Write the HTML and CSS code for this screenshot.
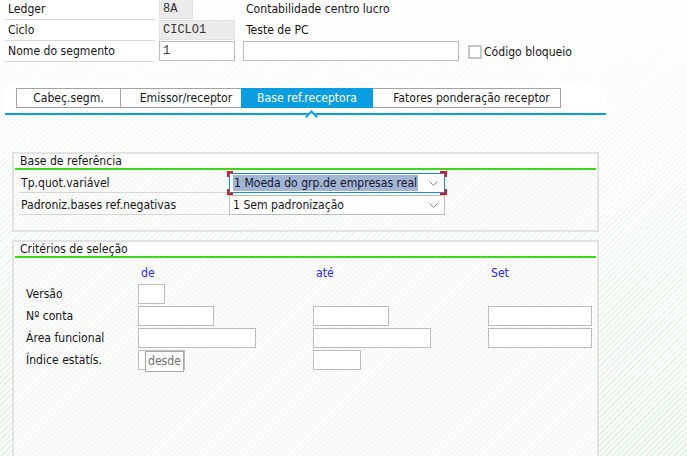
FILE: index.html
```html
<!DOCTYPE html>
<html lang="pt">
<head>
<meta charset="utf-8">
<title>Segmento</title>
<link rel="stylesheet" href="styles.css">
</head>
<body>
<div class="page">
  <div class="hdr">
    <div class="lbl">Ledger</div>
    <div class="cell"><div class="fld ro mono w-ledger">8A</div></div>
    <div class="desc">Contabilidade centro lucro</div>

    <div class="lbl">Ciclo</div>
    <div class="cell"><div class="fld ro mono w-ciclo">CICLO1</div></div>
    <div class="desc">Teste de PC</div>

    <div class="lbl">Nome do segmento</div>
    <div class="cell"><div class="fld mono w-ciclo">1</div></div>
    <div class="desc2">
      <div class="fld w-text"></div>
      <span class="chk"></span>
      <span class="chk-lbl">Código bloqueio</span>
    </div>
  </div>

  <div class="tabbar">
    <div class="tab t1">Cabeç.segm.</div>
    <div class="tab t2">Emissor/receptor</div>
    <div class="tab t3 sel">Base ref.receptora</div>
    <div class="tab t4">Fatores ponderação receptor</div>
  </div>

  <div class="group g1">
    <div class="gtitle">Base de referência</div>
    <div class="gbody1">
      <div class="frow">
        <div class="flbl">Tp.quot.variável</div>
        <div class="dd focus">
          <span class="selected">1 Moeda do grp.de empresas real</span>
          <svg class="chev" width="9" height="5" viewBox="0 0 9 5"><polyline points="0.5,0.5 4.5,4.5 8.5,0.5" fill="none" stroke="#8a8a8a" stroke-width="1"/></svg>
          <svg class="brackets" width="220" height="24" viewBox="0 0 220 24">
            <polyline points="1,6 1,1 6,1" fill="none" stroke="#e0161b" stroke-width="2"/>
            <polyline points="213,1 219,1 219,6" fill="none" stroke="#e0161b" stroke-width="2"/>
            <polyline points="1,18 1,23 6,23" fill="none" stroke="#e0161b" stroke-width="2"/>
            <polyline points="213,23 219,23 219,18" fill="none" stroke="#e0161b" stroke-width="2"/>
          </svg>
        </div>
      </div>
      <div class="frow">
        <div class="flbl">Padroniz.bases ref.negativas</div>
        <div class="dd">
          <span>1 Sem padronização</span>
          <svg class="chev" width="9" height="5" viewBox="0 0 9 5"><polyline points="0.5,0.5 4.5,4.5 8.5,0.5" fill="none" stroke="#8a8a8a" stroke-width="1"/></svg>
        </div>
      </div>
    </div>
  </div>

  <div class="group g2">
    <div class="gtitle">Critérios de seleção</div>
    <div class="crit">
      <div></div>
      <div class="colh">de</div>
      <div class="colh">até</div>
      <div class="colh">Set</div>

      <div class="clbl">Versão</div>
      <div><div class="fld w-27"></div></div>
      <div></div>
      <div></div>

      <div class="clbl">Nº conta</div>
      <div><div class="fld w-75"></div></div>
      <div><div class="fld w-75"></div></div>
      <div><div class="fld w-104"></div></div>

      <div class="clbl">Área funcional</div>
      <div><div class="fld w-118"></div></div>
      <div><div class="fld w-118"></div></div>
      <div><div class="fld w-104"></div></div>

      <div class="clbl">Índice estatís.</div>
      <div class="tipcell"><div class="fld w-47"></div><div class="tip">desde</div></div>
      <div><div class="fld w-48"></div></div>
      <div></div>
    </div>
  </div>
</div>
</body>
</html>
```

FILE: styles.css
```css
* { box-sizing: border-box; }

html, body {
  margin: 0;
  height: 100%;
}

body {
  font-family: "DejaVu Sans Condensed", "DejaVu Sans", sans-serif;
  font-stretch: condensed;
  font-size: 12.1px;
  color: #161616;
  overflow: hidden;
  background:
    linear-gradient(to bottom, rgba(255,255,255,0.92) 0%, rgba(255,255,255,0.55) 45%, rgba(255,255,255,0.1) 100%),
    repeating-linear-gradient(135deg, #ffffff 0 2px, #e0f2e0 2px 4px);
}

.page {
  padding-left: 5px;
}

/* header */
.hdr {
  display: grid;
  grid-template-columns: 150px 88px auto;
  grid-auto-rows: 21px;
  margin-top: -1px;
}

.lbl {
  height: 21px;
  line-height: 20px;
  padding-left: 3px;
  border-bottom: 1px solid #dadada;
  background: #fff;
}

.cell {
  padding-left: 4px;
}

.desc {
  padding-left: 3px;
  line-height: 20px;
}

.desc2 {
  display: flex;
  align-items: flex-start;
}

.fld {
  height: 20px;
  border: 1px solid #bcbcbc;
  background: #fff;
  padding-left: 3px;
  line-height: 18px;
}

.fld.ro {
  background: #ebebeb;
  border-color: #e2e2e2;
}

.mono {
  font-family: "Liberation Mono", "Courier New", monospace;
  font-stretch: normal;
  font-size: 12px;
  color: #333;
}

.w-ledger { width: 34px; }
.w-ciclo { width: 76px; }
.w-text { width: 216px; }

.chk {
  width: 14px;
  height: 14px;
  border: 2px solid #c6c6c6;
  background: #fff;
  margin: 4px 2px 0 9px;
}

.chk-lbl {
  line-height: 20px;
  margin-top: 1px;
}

/* tabs */
.tabbar {
  margin-top: 23px;
  width: 601px;
  height: 30px;
  background: #fff;
  border-bottom: 2px solid #0a9ee0;
  padding: 3px 0 0 11px;
  display: flex;
  align-items: flex-start;
}

.tab {
  height: 20px;
  border: 1px solid #a3a3a3;
  line-height: 18px;
  text-align: center;
  margin-left: -1px;
  background: #fff;
  color: #161616;
  white-space: nowrap;
}

.t1 { width: 105px; margin-left: 0; }
.t2 { width: 122px; padding-left: 10px; }
.t3 { width: 132px; }
.t4 { width: 189px; padding-left: 10px; }

.tab.sel {
  position: relative;
  z-index: 1;
  background: #0a9ee0;
  border-color: #0a9ee0;
  color: #fff;
}

.tab.sel::after {
  content: "";
  position: absolute;
  left: 65px;
  top: 23px;
  width: 7px;
  height: 7px;
  background: #fff;
  border-left: 2px solid #0a9ee0;
  border-top: 2px solid #0a9ee0;
  transform: rotate(45deg);
}

/* groups */
.group {
  margin-left: 7px;
  width: 587px;
  border: 2px solid #e2e2e2;
  background: repeating-linear-gradient(135deg, #fdfdfd 0 2px, #f6f8f6 2px 4px);
}

.g1 {
  margin-top: 37px;
  height: 80px;
}

.g2 {
  margin-top: 8px;
  height: 240px;
}

.gtitle {
  background: #fff;
  height: 16px;
  line-height: 15px;
  padding-left: 5px;
  border-bottom: 2px solid #3fd81f;
  margin: 0 1px;
}

.gbody1 {
  padding: 3px 0 0 5px;
  display: flex;
  flex-direction: column;
  gap: 2px;
}

.frow {
  display: flex;
}

.flbl {
  width: 210px;
  height: 20px;
  line-height: 21px;
  padding-left: 2px;
  border-bottom: 1px solid #d6d6d6;
  white-space: nowrap;
}

.dd {
  position: relative;
  width: 216px;
  height: 20px;
  border: 1px solid #bdbdbd;
  background: #fff;
  padding-left: 3px;
  line-height: 18px;
  display: flex;
  align-items: center;
  white-space: nowrap;
}

.dd.focus {
  border-color: #1c88d4;
}

.dd .selected {
  background: #a2b6d4;
  color: #15152e;
  line-height: 16px;
  padding: 0 1px;
}

.chev {
  position: absolute;
  right: 6px;
  top: 7px;
}

.brackets {
  position: absolute;
  left: -3px;
  top: -3px;
}

/* criteria */
.crit {
  display: grid;
  grid-template-columns: 112px 175px 175px 104px;
  grid-template-rows: 18px repeat(4, 20px);
  row-gap: 2px;
  padding: 6px 0 0 12px;
}

.colh {
  color: #2b2bf0;
  padding-left: 3px;
  line-height: 18px;
}

.clbl {
  line-height: 20px;
}

.w-27 { width: 27px; }
.w-47 { width: 47px; }
.w-48 { width: 48px; }
.w-75 { width: 76px; }
.w-104 { width: 104px; }
.w-118 { width: 118px; }

.tipcell {
  position: relative;
}

.tip {
  position: absolute;
  left: 7px;
  top: 1px;
  height: 21px;
  padding: 0 2px;
  border: 1px solid #aaaaaa;
  background: #fff;
  color: #6c6c6c;
  line-height: 19px;
}
```
